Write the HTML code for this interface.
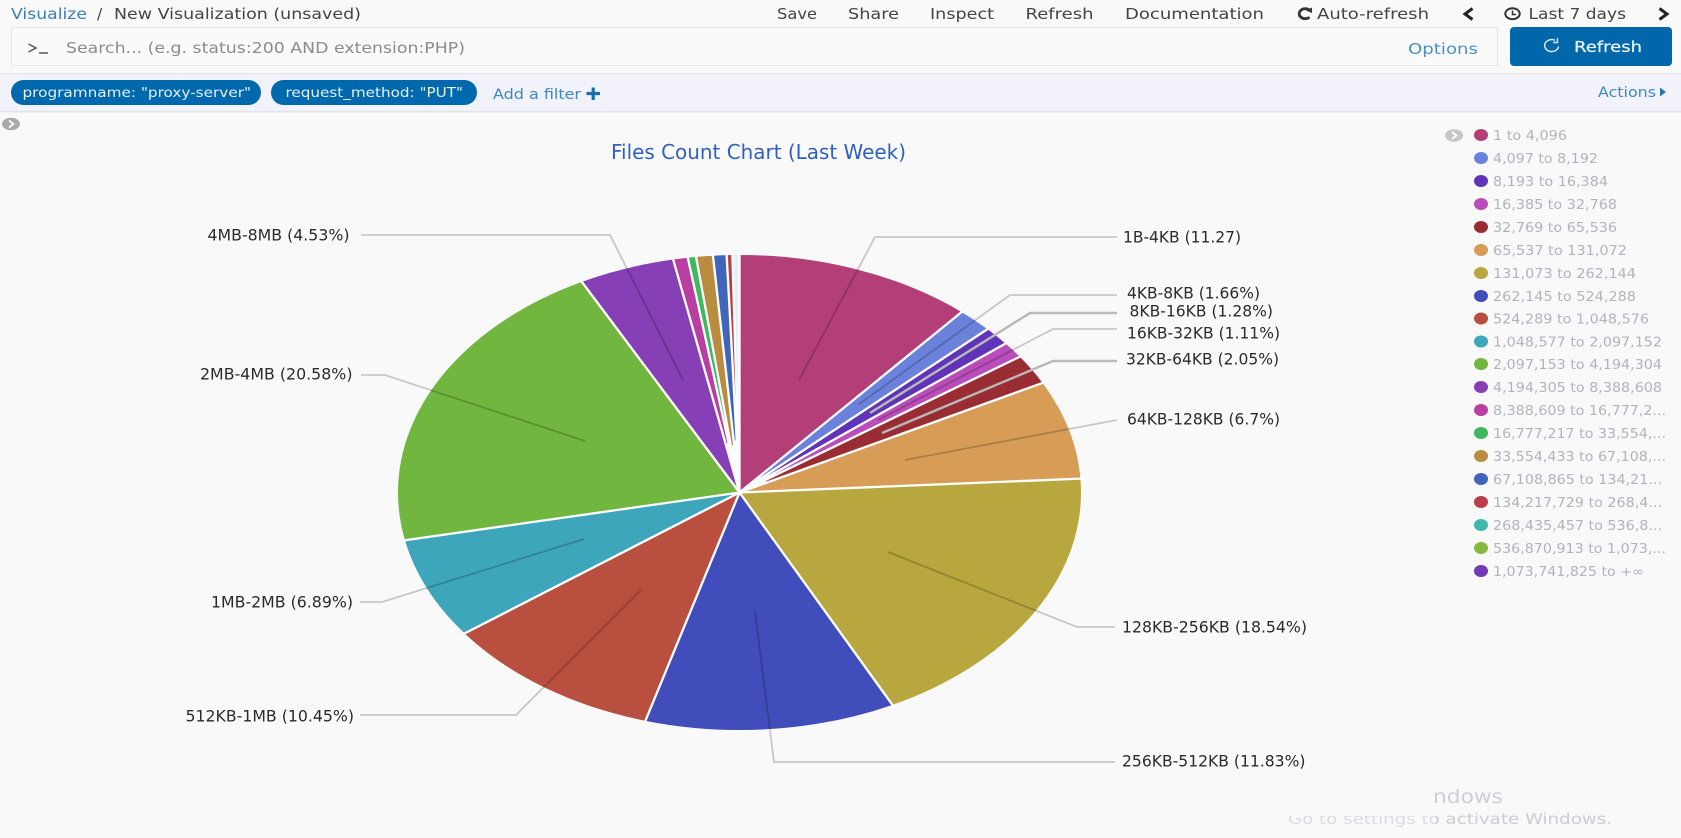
<!DOCTYPE html>
<html lang="en"><head><meta charset="utf-8"><title>Visualize</title>
<style>
html,body{margin:0;padding:0;background:#f9f9fa;width:1681px;height:838px;overflow:hidden}
svg{display:block;position:absolute;left:0;top:0;filter:blur(.35px)}
text{font-family:"DejaVu Sans",sans-serif;white-space:pre}
.nav{font-size:15.5px;fill:#444}
.lab{font-size:16px;fill:#2b2b2b}
.leg{font-size:13.5px;fill:#b4b3b8}
.ln{fill:none;stroke:#000;stroke-opacity:.2;stroke-width:1.8}
.ls{fill:none;stroke:#b9b9b9;stroke-width:2.4}
.sep{stroke:#fff;stroke-width:2.3;vector-effect:non-scaling-stroke}
.s{fill:none;stroke-width:341.5}
</style></head><body>
<svg width="1681" height="838" viewBox="0 0 1681 838" xmlns="http://www.w3.org/2000/svg">
<rect width="1681" height="838" fill="#f9f9fa"/>

<!-- top nav -->
<text x="11" y="19" class="nav" style="fill:#3b7fb4" textLength="76" lengthAdjust="spacingAndGlyphs">Visualize</text>
<text x="97" y="19" class="nav">/</text>
<text x="114" y="19" class="nav" textLength="247" lengthAdjust="spacingAndGlyphs">New Visualization (unsaved)</text>
<text x="777" y="19" class="nav" textLength="40" lengthAdjust="spacingAndGlyphs">Save</text>
<text x="848" y="19" class="nav" textLength="51" lengthAdjust="spacingAndGlyphs">Share</text>
<text x="930" y="19" class="nav" textLength="64" lengthAdjust="spacingAndGlyphs">Inspect</text>
<text x="1025.5" y="19" class="nav" textLength="68" lengthAdjust="spacingAndGlyphs">Refresh</text>
<text x="1125" y="19" class="nav" textLength="139" lengthAdjust="spacingAndGlyphs">Documentation</text>
<path d="M1309.5 10.2A6 5 0 1 0 1309.5 17.2" fill="none" stroke="#333" stroke-width="2.8"/>
<path d="M1306 10.5L1312 7.5V13Z" fill="#333"/>
<text x="1317" y="19" class="nav" textLength="112" lengthAdjust="spacingAndGlyphs">Auto-refresh</text>
<path d="M1472.5 8.5L1465 14L1472.5 19.5" fill="none" stroke="#222" stroke-width="3"/>
<ellipse cx="1512.5" cy="13.7" rx="7.2" ry="5.4" fill="none" stroke="#333" stroke-width="2"/>
<path d="M1512.5 10.5V14.5H1516" fill="none" stroke="#333" stroke-width="1.5"/>
<text x="1528.5" y="19" class="nav" textLength="97.5" lengthAdjust="spacingAndGlyphs">Last 7 days</text>
<path d="M1659.5 8.5L1667 14L1659.5 19.5" fill="none" stroke="#222" stroke-width="3"/>

<!-- search -->
<rect x="11.5" y="27.5" width="1486" height="38" fill="#fafafa" stroke="#e6e6e8"/>
<path d="M28.5 44L36 48L28.5 52" fill="none" stroke="#555" stroke-width="1.5"/>
<path d="M39 53H48" stroke="#555" stroke-width="1.5"/>
<text x="66" y="53" font-size="15" fill="#8b8b8b" textLength="399" lengthAdjust="spacingAndGlyphs">Search... (e.g. status:200 AND extension:PHP)</text>
<text x="1408" y="54" font-size="15" fill="#4a8fc9" textLength="70" lengthAdjust="spacingAndGlyphs">Options</text>
<rect x="1510" y="27" width="162" height="39" rx="4" fill="#0067ab"/>
<path d="M1555 40.3A7 6 0 1 0 1558.6 46.5" fill="none" stroke="#dbe7f1" stroke-width="1.5"/>
<path d="M1557.5 38V42.5H1553" fill="none" stroke="#dbe7f1" stroke-width="1.4"/>
<text x="1574" y="52" font-size="15.5" font-weight="400" fill="#e8f1f8" stroke="#e8f1f8" stroke-width=".25" textLength="68" lengthAdjust="spacingAndGlyphs">Refresh</text>

<!-- filter bar -->
<rect x="0" y="73" width="1681" height="1" fill="#e3e3e9"/>
<rect x="0" y="74" width="1681" height="38" fill="#f1f2fa"/>
<rect x="0" y="111" width="1681" height="1.5" fill="#e4e5ec"/>
<rect x="11" y="80" width="250" height="25" rx="12.5" fill="#0069ae"/>
<text x="22.5" y="97" font-size="13.5" fill="#e6f0f7" textLength="228.5" lengthAdjust="spacingAndGlyphs">programname: "proxy-server"</text>
<rect x="271" y="80" width="206" height="25" rx="12.5" fill="#0069ae"/>
<text x="285.5" y="97" font-size="13.5" fill="#e6f0f7" textLength="177.5" lengthAdjust="spacingAndGlyphs">request_method: "PUT"</text>
<text x="493" y="99" font-size="14.5" fill="#3f86c4" textLength="88" lengthAdjust="spacingAndGlyphs">Add a filter</text>
<path d="M586.5 93.5H600M593.2 87.5V100" stroke="#1a6eb0" stroke-width="3.2"/>
<text x="1598" y="97" font-size="14" fill="#3f86c4" textLength="58" lengthAdjust="spacingAndGlyphs">Actions</text>
<path d="M1660 87.5L1666 92L1660 96.5Z" fill="#2a74b4"/>

<!-- toggles -->
<ellipse cx="11" cy="124" rx="9" ry="6.2" fill="#a9a9aa"/>
<path d="M9 120.5L13.5 124L9 127.5" fill="none" stroke="#fff" stroke-width="1.8"/>
<ellipse cx="1454" cy="135.5" rx="9" ry="6.2" fill="#c5c5c6"/>
<path d="M1452 132L1456.5 135.5L1452 139" fill="none" stroke="#fff" stroke-width="1.8"/>

<!-- title -->
<text x="611" y="159" font-size="20" fill="#2f62bf" textLength="295" lengthAdjust="spacingAndGlyphs">Files Count Chart (Last Week)</text>

<!-- pie -->
<g transform="translate(739.5 492.5) scale(1 .6955)">
<g transform="rotate(-90)">
<circle class="s" r="170.75" pathLength="100" stroke="#b33e78" stroke-dasharray="11.27 100" stroke-dashoffset="0"/>
<circle class="s" r="170.75" pathLength="100" stroke="#6a82dc" stroke-dasharray="1.66 100" stroke-dashoffset="-11.27"/>
<circle class="s" r="170.75" pathLength="100" stroke="#6034b8" stroke-dasharray="1.28 100" stroke-dashoffset="-12.93"/>
<circle class="s" r="170.75" pathLength="100" stroke="#b94db9" stroke-dasharray="1.11 100" stroke-dashoffset="-14.21"/>
<circle class="s" r="170.75" pathLength="100" stroke="#9a2d33" stroke-dasharray="2.05 100" stroke-dashoffset="-15.32"/>
<circle class="s" r="170.75" pathLength="100" stroke="#d79d57" stroke-dasharray="6.7 100" stroke-dashoffset="-17.37"/>
<circle class="s" r="170.75" pathLength="100" stroke="#b7a73e" stroke-dasharray="18.54 100" stroke-dashoffset="-24.07"/>
<circle class="s" r="170.75" pathLength="100" stroke="#414dba" stroke-dasharray="11.83 100" stroke-dashoffset="-42.61"/>
<circle class="s" r="170.75" pathLength="100" stroke="#b84f3f" stroke-dasharray="10.45 100" stroke-dashoffset="-54.44"/>
<circle class="s" r="170.75" pathLength="100" stroke="#3ea6bb" stroke-dasharray="6.89 100" stroke-dashoffset="-64.89"/>
<circle class="s" r="170.75" pathLength="100" stroke="#70b63f" stroke-dasharray="20.58 100" stroke-dashoffset="-71.78"/>
<circle class="s" r="170.75" pathLength="100" stroke="#873fb6" stroke-dasharray="4.53 100" stroke-dashoffset="-92.36"/>
<circle class="s" r="170.75" pathLength="100" stroke="#b83ea1" stroke-dasharray=".69 100" stroke-dashoffset="-96.89"/>
<circle class="s" r="170.75" pathLength="100" stroke="#3fb95f" stroke-dasharray=".39 100" stroke-dashoffset="-97.58"/>
<circle class="s" r="170.75" pathLength="100" stroke="#b98d3f" stroke-dasharray=".79 100" stroke-dashoffset="-97.97"/>
<circle class="s" r="170.75" pathLength="100" stroke="#4066bb" stroke-dasharray=".64 100" stroke-dashoffset="-98.76"/>
<circle class="s" r="170.75" pathLength="100" stroke="#bb3f48" stroke-dasharray=".27 100" stroke-dashoffset="-99.4"/>
<circle class="s" r="170.75" pathLength="100" stroke="#e4f2f6" stroke-dasharray=".33 100" stroke-dashoffset="-99.67"/>
</g>
<line class="sep" y2="-345"/>
<line class="sep" y2="-345" transform="rotate(40.57)"/>
<line class="sep" y2="-345" transform="rotate(46.55)"/>
<line class="sep" y2="-345" transform="rotate(51.16)"/>
<line class="sep" y2="-345" transform="rotate(55.15)"/>
<line class="sep" y2="-345" transform="rotate(62.53)"/>
<line class="sep" y2="-345" transform="rotate(86.65)"/>
<line class="sep" y2="-345" transform="rotate(153.4)"/>
<line class="sep" y2="-345" transform="rotate(196)"/>
<line class="sep" y2="-345" transform="rotate(233.6)"/>
<line class="sep" y2="-345" transform="rotate(258.4)"/>
<line class="sep" y2="-345" transform="rotate(332.5)"/>
<line class="sep" y2="-345" transform="rotate(348.8)"/>
<line class="sep" y2="-345" transform="rotate(351.29)"/>
<line class="sep" y2="-345" transform="rotate(352.69)"/>
<line class="sep" y2="-345" transform="rotate(355.54)"/>
<line class="sep" y2="-345" transform="rotate(357.84)"/>
<line class="sep" y2="-345" transform="rotate(358.81)"/>
</g>
<!-- white wedges where thin slices vanish toward the centre -->
<path d="M740 493L725 446L729 441L733 446L737 436L740.5 446Z" fill="#fbfbfb"/>
<path d="M740 493L758 478.5L766 474L760 479.5L770 478L762 484.5Z" fill="#fbfbfb"/>

<!-- leader lines -->
<path class="ln" d="M1117 237H875L799 380"/>
<path class="ln" d="M1117 295H1010L858 405"/>
<path class="ls" d="M1117 313H1030L870 413"/>
<path class="ln" d="M1117 329H1053L878 420"/>
<path class="ls" d="M1117 361H1053L882 433"/>
<path class="ln" d="M1117 420L905 460"/>
<path class="ln" d="M1115 627H1077L888 552"/>
<path class="ln" d="M1115 762H774L755 611"/>
<path class="ln" d="M360 715H516L641 590"/>
<path class="ln" d="M360 602H382L584 539"/>
<path class="ln" d="M361 375H385L585 441"/>
<path class="ln" d="M361 235H610L683 380"/>

<!-- labels -->
<text class="lab" x="1123" y="242.5" textLength="118" lengthAdjust="spacingAndGlyphs">1B-4KB (11.27)</text>
<text class="lab" x="1127" y="298.5" textLength="133" lengthAdjust="spacingAndGlyphs">4KB-8KB (1.66%)</text>
<text class="lab" x="1129.5" y="316.5" textLength="143.5" lengthAdjust="spacingAndGlyphs">8KB-16KB (1.28%)</text>
<text class="lab" x="1127" y="338.5" textLength="153" lengthAdjust="spacingAndGlyphs">16KB-32KB (1.11%)</text>
<text class="lab" x="1126" y="364.5" textLength="153" lengthAdjust="spacingAndGlyphs">32KB-64KB (2.05%)</text>
<text class="lab" x="1127" y="424.5" textLength="153" lengthAdjust="spacingAndGlyphs">64KB-128KB (6.7%)</text>
<text class="lab" x="1122" y="632.5" textLength="185" lengthAdjust="spacingAndGlyphs">128KB-256KB (18.54%)</text>
<text class="lab" x="1122" y="766.5" textLength="183.5" lengthAdjust="spacingAndGlyphs">256KB-512KB (11.83%)</text>
<text class="lab" x="207.5" y="240.5" textLength="142" lengthAdjust="spacingAndGlyphs">4MB-8MB (4.53%)</text>
<text class="lab" x="200" y="379.5" textLength="152.5" lengthAdjust="spacingAndGlyphs">2MB-4MB (20.58%)</text>
<text class="lab" x="211" y="607.5" textLength="142" lengthAdjust="spacingAndGlyphs">1MB-2MB (6.89%)</text>
<text class="lab" x="185.5" y="721.5" textLength="168.5" lengthAdjust="spacingAndGlyphs">512KB-1MB (10.45%)</text>

<!-- legend -->
<g>
<ellipse cx="1481" cy="135" rx="7" ry="6" fill="#b33e78"/><text class="leg" x="1493" y="140" textLength="74" lengthAdjust="spacingAndGlyphs">1 to 4,096</text>
<ellipse cx="1481" cy="158" rx="7" ry="6" fill="#6a82dc"/><text class="leg" x="1493" y="163" textLength="105" lengthAdjust="spacingAndGlyphs">4,097 to 8,192</text>
<ellipse cx="1481" cy="181" rx="7" ry="6" fill="#6034b8"/><text class="leg" x="1493" y="186" textLength="115" lengthAdjust="spacingAndGlyphs">8,193 to 16,384</text>
<ellipse cx="1481" cy="204" rx="7" ry="6" fill="#b94db9"/><text class="leg" x="1493" y="209" textLength="124" lengthAdjust="spacingAndGlyphs">16,385 to 32,768</text>
<ellipse cx="1481" cy="227" rx="7" ry="6" fill="#9a2d33"/><text class="leg" x="1493" y="232" textLength="124" lengthAdjust="spacingAndGlyphs">32,769 to 65,536</text>
<ellipse cx="1481" cy="250" rx="7" ry="6" fill="#d79d57"/><text class="leg" x="1493" y="255" textLength="134" lengthAdjust="spacingAndGlyphs">65,537 to 131,072</text>
<ellipse cx="1481" cy="273" rx="7" ry="6" fill="#b7a73e"/><text class="leg" x="1493" y="278" textLength="143" lengthAdjust="spacingAndGlyphs">131,073 to 262,144</text>
<ellipse cx="1481" cy="296" rx="7" ry="6" fill="#414dba"/><text class="leg" x="1493" y="301" textLength="143" lengthAdjust="spacingAndGlyphs">262,145 to 524,288</text>
<ellipse cx="1481" cy="318.5" rx="7" ry="6" fill="#b84f3f"/><text class="leg" x="1493" y="323.5" textLength="156" lengthAdjust="spacingAndGlyphs">524,289 to 1,048,576</text>
<ellipse cx="1481" cy="341.5" rx="7" ry="6" fill="#3ea6bb"/><text class="leg" x="1493" y="346.5" textLength="169" lengthAdjust="spacingAndGlyphs">1,048,577 to 2,097,152</text>
<ellipse cx="1481" cy="364" rx="7" ry="6" fill="#70b63f"/><text class="leg" x="1493" y="369" textLength="169" lengthAdjust="spacingAndGlyphs">2,097,153 to 4,194,304</text>
<ellipse cx="1481" cy="387" rx="7" ry="6" fill="#873fb6"/><text class="leg" x="1493" y="392" textLength="169" lengthAdjust="spacingAndGlyphs">4,194,305 to 8,388,608</text>
<ellipse cx="1481" cy="410" rx="7" ry="6" fill="#b83ea1"/><text class="leg" x="1493" y="415" textLength="173" lengthAdjust="spacingAndGlyphs">8,388,609 to 16,777,2...</text>
<ellipse cx="1481" cy="433" rx="7" ry="6" fill="#3fb95f"/><text class="leg" x="1493" y="438" textLength="173" lengthAdjust="spacingAndGlyphs">16,777,217 to 33,554,...</text>
<ellipse cx="1481" cy="456" rx="7" ry="6" fill="#b98d3f"/><text class="leg" x="1493" y="461" textLength="173" lengthAdjust="spacingAndGlyphs">33,554,433 to 67,108,...</text>
<ellipse cx="1481" cy="479" rx="7" ry="6" fill="#4066bb"/><text class="leg" x="1493" y="484" textLength="169" lengthAdjust="spacingAndGlyphs">67,108,865 to 134,21...</text>
<ellipse cx="1481" cy="502" rx="7" ry="6" fill="#bb3f48"/><text class="leg" x="1493" y="507" textLength="169" lengthAdjust="spacingAndGlyphs">134,217,729 to 268,4...</text>
<ellipse cx="1481" cy="525" rx="7" ry="6" fill="#3fb9ad"/><text class="leg" x="1493" y="530" textLength="169" lengthAdjust="spacingAndGlyphs">268,435,457 to 536,8...</text>
<ellipse cx="1481" cy="548" rx="7" ry="6" fill="#85b93f"/><text class="leg" x="1493" y="553" textLength="173" lengthAdjust="spacingAndGlyphs">536,870,913 to 1,073,...</text>
<ellipse cx="1481" cy="571" rx="7" ry="6" fill="#7338b8"/><text class="leg" x="1493" y="576" textLength="151" lengthAdjust="spacingAndGlyphs">1,073,741,825 to +∞</text>
</g>

<!-- watermark -->
<text x="1433" y="803" font-size="19" fill="#cfcfd1" textLength="70" lengthAdjust="spacingAndGlyphs">ndows</text>
<clipPath id="c"><rect x="1280" y="816" width="340" height="14"/></clipPath>
<clipPath id="d"><rect x="1435" y="808" width="190" height="20"/></clipPath>
<text x="1288" y="824" font-size="15" fill="#dcdcde" clip-path="url(#c)" textLength="324" lengthAdjust="spacingAndGlyphs">Go to settings to activate Windows.</text>
<text x="1288" y="824" font-size="15" fill="#cfcfd1" clip-path="url(#d)" textLength="324" lengthAdjust="spacingAndGlyphs">Go to settings to activate Windows.</text>
</svg>
</body></html>
